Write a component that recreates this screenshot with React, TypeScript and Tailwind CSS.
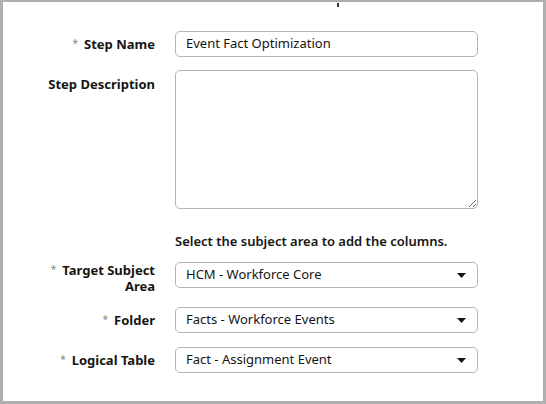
import React from "react";

const font = { fontFamily: '"Noto Sans", "Open Sans", sans-serif' };

function Caret() {
  return (
    <svg width="9" height="5" viewBox="0 0 9 5" className="shrink-0">
      <path d="M0 0 H9 L4.5 5 Z" fill="#161513" />
    </svg>
  );
}

function Label({ children, required, className = "" }: { children: React.ReactNode; required?: boolean; className?: string }) {
  return (
    <div className={`w-[152px] shrink-0 text-right text-[13px] font-bold leading-[16px] text-[#161513] ${className}`}>
      {required && <span className="relative top-[-2px] mr-[6px] text-[10px] font-normal leading-[10px] text-[#7c8a80]">*</span>}
      {children}
    </div>
  );
}

function Select({ value }: { value: string }) {
  return (
    <div className="flex h-[26px] w-[303px] items-center justify-between rounded-[5px] border border-[#b5b5b5] bg-white pl-[10px] pr-[11px] text-[13px] text-[#161513]">
      <span>{value}</span>
      <Caret />
    </div>
  );
}

export default function App() {
  return (
    <div
      style={font}
      className="relative h-[404px] w-[546px] border-b-[3px] border-l-[3px] border-r-[3px] border-t-[2px] border-[#b0aeae] bg-white"
    >
      <div className="absolute left-[334px] top-[1px] h-[4px] w-[2px] bg-[#333]" />
      <div className="flex flex-col pt-[29px]">
        <div className="flex items-start gap-[20px]">
          <Label required className="pt-[5px]">Step Name</Label>
          <div className="flex h-[26px] w-[303px] items-center rounded-[5px] border border-[#b5b5b5] pl-[10px] text-[13px] text-[#161513]">
            Event Fact Optimization
          </div>
        </div>
        <div className="mt-[13px] flex items-start gap-[20px]">
          <Label className="pt-[6px]">Step Description</Label>
          <textarea className="block h-[139px] w-[303px] resize rounded-[5px] border border-[#b5b5b5] outline-none" />
        </div>
        <div className="mt-[24px] flex gap-[20px]">
          <div className="w-[152px] shrink-0" />
          <div className="text-[13px] font-semibold leading-[16px] text-[#161513]">
            Select the subject area to add the columns.
          </div>
        </div>
        <div className="mt-[13px] flex items-start gap-[20px]">
          <div className="flex w-[152px] shrink-0 flex-col items-end text-[13px] font-bold leading-[16px] text-[#161513]">
            <div>
              <span className="relative top-[-2px] mr-[6px] text-[10px] font-normal leading-[10px] text-[#7c8a80]">*</span>
              Target Subject
            </div>
            <div>Area</div>
          </div>
          <Select value="HCM - Workforce Core" />
        </div>
        <div className="mt-[13px] flex items-start gap-[20px]">
          <Label required className="pt-[5px]">Folder</Label>
          <Select value="Facts - Workforce Events" />
        </div>
        <div className="mt-[14px] flex items-start gap-[20px]">
          <Label required className="pt-[5px]">Logical Table</Label>
          <Select value="Fact - Assignment Event" />
        </div>
      </div>
    </div>
  );
}
